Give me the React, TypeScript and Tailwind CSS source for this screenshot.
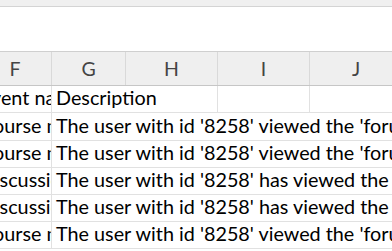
import React from "react";

const rows = [
  { f: "Course module viewed", d: "The user with id '8258' viewed the 'forum' activity with course module id '2'." },
  { f: "Course module viewed", d: "The user with id '8258' viewed the 'forum' activity with course module id '2'." },
  { f: "Discussion viewed", d: "The user with id '8258' has viewed the discussion with id '1'." },
  { f: "Discussion viewed", d: "The user with id '8258' has viewed the discussion with id '1'." },
  { f: "Course module viewed", d: "The user with id '8258' viewed the 'forum' activity with course module id '2'." },
];

const font = { fontFamily: "Lato, 'Open Sans', sans-serif" };

export default function App() {
  return (
    <div className="w-[392px] h-[251px] overflow-hidden bg-white" style={font}>
      <div className="h-[6px] bg-[#f0f0f0]" />
      <div className="h-[1px] bg-[#d4d4d4]" />
      <div className="h-[44px] bg-white" />
      <div className="h-[1px] bg-[#cfcfcf]" />
      <div className="ml-[-21px] w-[520px]">
        {/* column header row */}
        <div className="flex h-[34px] bg-[#efefef] border-b border-[#c6c6c6] text-[19.5px] text-[#444]">
          <div className="w-[73px] shrink-0 border-r border-[#d9d9d9] flex items-end justify-center pb-[2px]">F</div>
          <div className="w-[74px] shrink-0 border-r border-[#d9d9d9] flex items-end justify-center pb-[2px]">G</div>
          <div className="w-[92px] shrink-0 border-r border-[#d9d9d9] flex items-end justify-center pb-[2px]">H</div>
          <div className="w-[92px] shrink-0 border-r border-[#d9d9d9] flex items-end justify-center pb-[2px]">I</div>
          <div className="w-[92px] shrink-0 flex items-end justify-center pb-[2px]">J</div>
        </div>
        {/* first data row */}
        <div className="flex h-[27px] border-b border-[#e1e1e1] text-[19.8px] text-black leading-none">
          <div className="w-[73px] shrink-0 border-r border-[#e1e1e1] overflow-hidden whitespace-nowrap flex items-end pb-[4px] pl-[1px]">Event name</div>
          <div className="w-[166px] shrink-0 border-r border-[#e1e1e1] whitespace-nowrap flex items-end pb-[4px] pl-[4px]">Description</div>
          <div className="w-[92px] shrink-0 border-r border-[#e1e1e1]" />
          <div className="w-[92px] shrink-0" />
        </div>
        {rows.map((r, i) => (
          <div
            key={i}
            className={`flex ${i === 0 ? "h-[28px]" : "h-[27px]"} border-b border-[#e1e1e1] text-[19.8px] text-black leading-none`}
          >
            <div className="w-[73px] shrink-0 border-r border-[#e1e1e1] overflow-hidden whitespace-nowrap flex items-end pb-[4px] pl-[1px]">{r.f}</div>
            <div className="flex-1 whitespace-nowrap overflow-hidden flex items-end pb-[4px] pl-[4px]">{r.d}</div>
          </div>
        ))}
      </div>
    </div>
  );
}
